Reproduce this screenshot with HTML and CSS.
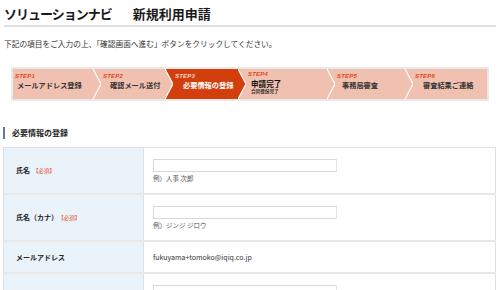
FILE: index.html
```html
<!DOCTYPE html>
<html lang="ja">
<head>
<meta charset="utf-8">
<title>ソリューションナビ 新規利用申請</title>
<link rel="stylesheet" href="styles.css">
</head>
<body>
<h1 class="title"><span class="title-main">ソリューションナビ</span><span class="title-sub">新規利用申請</span></h1>
<div class="rule"></div>
<p class="lead">下記の項目をご入力の上、「確認画面へ進む」ボタンをクリックしてください。</p>

<div class="steps">
  <div class="step w1">
    <div class="step-no">STEP1</div>
    <div class="step-label i2">メールアドレス登録</div>
  </div>
  <svg class="sep" viewBox="0 0 8 30" preserveAspectRatio="none"><rect width="8" height="30" fill="#f0c1b0"/><polygon points="0,0 8,15 0,30" fill="#f0c1b0"/><polyline points="0,0 8,15 0,30" fill="none" stroke="#fff" stroke-width="1.2"/></svg>
  <div class="step w2">
    <div class="step-no">STEP2</div>
    <div class="step-label i7">確認メール送付</div>
  </div>
  <svg class="sep" viewBox="0 0 8 30" preserveAspectRatio="none"><rect width="8" height="30" fill="#d23f0c"/><polygon points="0,0 8,15 0,30" fill="#f0c1b0"/><polyline points="0,0 8,15 0,30" fill="none" stroke="#fff" stroke-width="1.2"/></svg>
  <div class="step w3 active">
    <div class="step-no">STEP3</div>
    <div class="step-label i8">必要情報の登録</div>
  </div>
  <svg class="sep" viewBox="0 0 8 30" preserveAspectRatio="none"><rect width="8" height="30" fill="#f0c1b0"/><polygon points="0,0 8,15 0,30" fill="#d23f0c"/><polyline points="0,0 8,15 0,30" fill="none" stroke="#fff" stroke-width="1.2"/></svg>
  <div class="step w4 two">
    <div class="step-no">STEP4</div>
    <div class="step-label i3">申請完了</div>
    <div class="step-small i3">合同登録完了</div>
  </div>
  <svg class="sep" viewBox="0 0 8 30" preserveAspectRatio="none"><rect width="8" height="30" fill="#f0c1b0"/><polygon points="0,0 8,15 0,30" fill="#f0c1b0"/><polyline points="0,0 8,15 0,30" fill="none" stroke="#fff" stroke-width="1.2"/></svg>
  <div class="step w5">
    <div class="step-no">STEP5</div>
    <div class="step-label i5">事務局審査</div>
  </div>
  <svg class="sep" viewBox="0 0 8 30" preserveAspectRatio="none"><rect width="8" height="30" fill="#f0c1b0"/><polygon points="0,0 8,15 0,30" fill="#f0c1b0"/><polyline points="0,0 8,15 0,30" fill="none" stroke="#fff" stroke-width="1.2"/></svg>
  <div class="step w6">
    <div class="step-no">STEP6</div>
    <div class="step-label i8">審査結果ご連絡</div>
  </div>
</div>

<h2 class="section">必要情報の登録</h2>

<table class="form">
  <tr class="r1">
    <th>氏名<span class="req">【必須】</span></th>
    <td><input class="field" type="text"><div class="hint">例）人事 次郎</div></td>
  </tr>
  <tr class="r2">
    <th>氏名（カナ）<span class="req">【必須】</span></th>
    <td><input class="field" type="text"><div class="hint">例）ジンジ ジロウ</div></td>
  </tr>
  <tr class="r3">
    <th>メールアドレス</th>
    <td class="value">fukuyama+tomoko@iqiq.co.jp</td>
  </tr>
  <tr class="r4">
    <th>勤務先企業名<span class="req">【必須】</span></th>
    <td><input class="field" type="text"><div class="hint">例）株式会社アイキュー</div></td>
  </tr>
</table>
</body>
</html>
```

FILE: styles.css
```css
html, body {
  margin: 0;
  background: #fff;
}
body {
  padding: 0 4px 0 3px;
  font-family: "Noto Sans CJK JP", "Noto Sans", sans-serif;
  color: #222;
  overflow: hidden;
}
.title {
  margin: 0;
  padding: 6px 0 0 1px;
  font-size: 13px;
  line-height: 16px;
  font-weight: 700;
  color: #1a1a1a;
}
.title-main {
  letter-spacing: -1px;
}
.title-sub {
  margin-left: 21px;
}
.rule {
  height: 2px;
  background: #e0e0e0;
  margin: 3px 0 0 1px;
}
.lead {
  margin: 12px 0 0 1px;
  font-size: 7.7px;
  line-height: 10px;
  color: #333;
}
.steps {
  display: flex;
  margin: 18px 7px 0 8px;
  border: 2px solid #e9e9e9;
  height: 30px;
  background: #f0c1b0;
}
.sep {
  flex: 0 0 8px;
  width: 8px;
  height: 30px;
  display: block;
}
.step {
  box-sizing: border-box;
  padding: 4px 0 0 2px;
  background: #f0c1b0;
  color: #333;
}
.step.active {
  background: #d23f0c;
  color: #fff;
}
.w1 { flex: 0 0 80px; }
.w2 { flex: 0 0 64px; }
.w3 { flex: 0 0 65px; }
.w4 { flex: 0 0 81px; }
.w5 { flex: 0 0 70px; }
.w6 { flex: 0 0 74px; }
.step-no {
  font-family: "Liberation Sans", Arial, sans-serif;
  font-style: italic;
  font-weight: 700;
  font-size: 6px;
  line-height: 7px;
  letter-spacing: 0.2px;
  color: #e4481a;
}
.active .step-no {
  color: #fbd9c9;
}
.step-label {
  font-size: 7.2px;
  line-height: 10px;
  font-weight: 700;
  white-space: nowrap;
}
.step.two {
  padding-top: 2px;
}
.two .step-label {
  font-size: 7.6px;
  line-height: 9px;
  margin-top: 1px;
  color: #111;
}
.step-small {
  font-size: 4.6px;
  line-height: 6px;
  font-weight: 700;
  white-space: nowrap;
}
.i2 { padding-left: 2px; }
.i3 { padding-left: 3px; }
.i5 { padding-left: 5px; }
.i7 { padding-left: 7px; }
.i8 { padding-left: 8px; }

.section {
  margin: 26px 0 8px 0;
  border-left: 2px solid #5a7ea4;
  padding-left: 7px;
  height: 12px;
  font-size: 8px;
  line-height: 12px;
  font-weight: 700;
  color: #222;
}
.form {
  width: 493px;
  border-collapse: collapse;
  table-layout: fixed;
}
.form th,
.form td {
  border: 1px solid #e0e0e0;
  vertical-align: middle;
}
.form tr + tr th,
.form tr + tr td {
  border-top: 2px solid #e8e8e8;
}
.form th {
  width: 127px;
  background: #eaf2fa;
  text-align: left;
  padding: 0 0 0 12px;
  font-size: 7px;
  line-height: 10px;
  font-weight: 700;
  color: #222;
}
.req {
  margin-left: 3px;
  font-size: 5.5px;
  font-weight: 400;
  color: #e0542a;
}
.form td {
  padding: 11px 10px 10px 9px;
}
.field {
  display: block;
  box-sizing: border-box;
  width: 184px;
  height: 13px;
  margin: 0;
  border: 1px solid #d9d9d9;
  border-right-color: #e6e6e6;
  background: #fff;
}
.hint {
  margin-top: 1px;
  font-size: 6.5px;
  line-height: 10px;
  color: #555;
}
.form td.value {
  padding-top: 10px;
  padding-bottom: 10px;
  font-size: 7px;
  line-height: 10px;
  color: #333;
}
```
